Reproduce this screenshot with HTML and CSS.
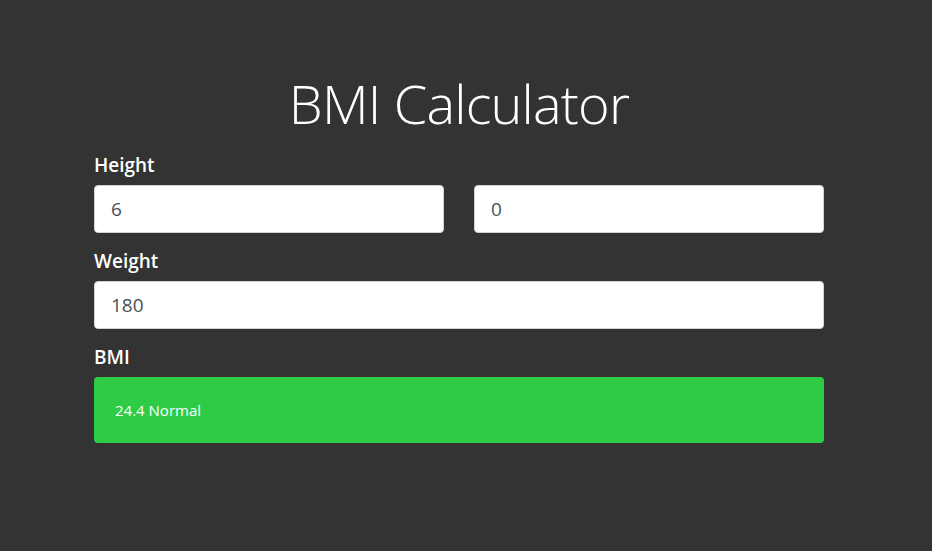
FILE: index.html
```html
<!DOCTYPE html>
<html lang="en">
<head>
<meta charset="utf-8">
<title>BMI Calculator</title>
<link rel="stylesheet" href="styles.css">
</head>
<body>
<main class="container">
  <h1 class="title">BMI Calculator</h1>
  <div class="group">
    <label class="label">Height</label>
    <div class="row">
      <input class="field" type="text" value="6">
      <input class="field" type="text" value="0">
    </div>
  </div>
  <div class="group">
    <label class="label">Weight</label>
    <input class="field" type="text" value="180">
  </div>
  <div class="group">
    <label class="label">BMI</label>
    <div class="result">24.4 Normal</div>
  </div>
</main>
</body>
</html>
```
FILE: styles.css
```css
html, body {
  margin: 0;
  padding: 0;
  background: #333333;
  height: 100%;
}
body {
  font-family: "Open Sans", "Noto Sans", sans-serif;
  color: #ffffff;
}
.container {
  width: 730px;
  margin: 0 0 0 94px;
  padding-top: 70px;
  display: flex;
  flex-direction: column;
}
.title {
  margin: 0 0 16px;
  font-size: 54px;
  font-weight: 300;
  line-height: 67px;
  text-align: center;
  letter-spacing: -0.8px;
}
.group {
  display: flex;
  flex-direction: column;
  margin-bottom: 16px;
}
.label {
  font-size: 19px;
  font-weight: 600;
  line-height: 24px;
  margin-bottom: 8px;
}
.row {
  display: flex;
  gap: 30px;
}
.field {
  box-sizing: border-box;
  width: 100%;
  height: 48px;
  padding: 0 16px;
  border: 1px solid #ced4da;
  border-radius: 4px;
  background: #ffffff;
  color: #495057;
  font-family: "Open Sans", "Noto Sans", sans-serif;
  font-size: 19px;
  outline: none;
}
.result {
  box-sizing: border-box;
  height: 66px;
  padding: 0 21px;
  display: flex;
  align-items: center;
  background: #2ecc46;
  border-radius: 4px;
  font-size: 15px;
  color: #ffffff;
}
```
